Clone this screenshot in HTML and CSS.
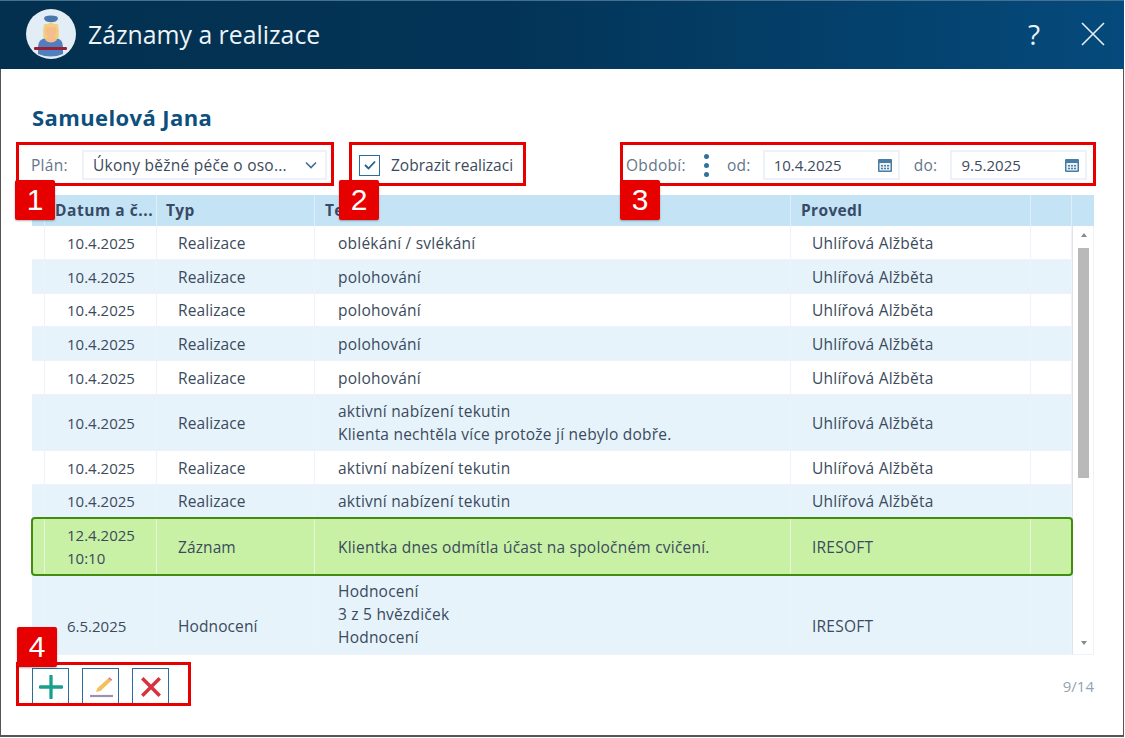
FILE: index.html
```html
<!DOCTYPE html>
<html lang="cs">
<head>
<meta charset="utf-8">
<title>Záznamy a realizace</title>
<link rel="stylesheet" href="styles.css">
</head>
<body>
<div class="window">
  <header class="titlebar">
    <svg class="avatar" viewBox="0 0 50 50" aria-hidden="true">
      <circle cx="25" cy="25" r="25" fill="#e3edf6"/>
      <path d="M12 38 q0 -8 8 -9 h10 q7 1 7 9 v7 q-12 5 -25 0z" fill="#4f7fbd"/>
      <path d="M17.500 29 q-1 -10 1 -14 h13 q2 4 1 14 l-3 2 h-9z" fill="#f3cf7c"/>
      <path d="M19 31 l2.500 -3 h7 l2.500 3 q-6 5 -12 0z" fill="#f5bd8d"/>
      <ellipse cx="25" cy="22" rx="5.500" ry="7" fill="#f5bd8d"/>
      <path d="M19 19 q1 -5 6 -5 q5 0 6 5 q-6 -3 -12 0z" fill="#f3cf7c"/>
      <path d="M20.500 12.500 q-4 -2.500 -1.500 -5 q6 -2 12 0 q2.500 2.500 -1.500 5 q-4.500 1.500 -9 0z" fill="#4a78ac"/>
      <rect x="8" y="38" width="33" height="3" rx="1" fill="#9a1f33"/>
    </svg>
    <h1 class="title">Záznamy a realizace</h1>
    <span class="help">?</span>
    <svg class="close" viewBox="0 0 24 24" aria-hidden="true">
      <path d="M1 1 L23 23 M23 1 L1 23" stroke="#e8f0f6" stroke-width="1.600" fill="none"/>
    </svg>
  </header>

  <main class="content">
    <h2 class="patient">Samuelová Jana</h2>

    <div class="toolbar">
      <div class="group group-plan">
        <span class="label">Plán:</span>
        <div class="field select">
          <span class="field-text">Úkony běžné péče o oso...</span>
          <svg class="chevron" viewBox="0 0 12 8" aria-hidden="true"><path d="M1 1.500 L6 6.500 L11 1.500" stroke="#3f6f97" stroke-width="1.600" fill="none"/></svg>
        </div>
        <span class="badge badge-1">1</span>
      </div>
      <div class="group group-check">
        <span class="checkbox">
          <svg viewBox="0 0 14 12" aria-hidden="true"><path d="M2 6 L5.500 9.500 L12 2.500" stroke="#1f5f8f" stroke-width="1.800" fill="none"/></svg>
        </span>
        <span class="check-label">Zobrazit realizaci</span>
        <span class="badge badge-2">2</span>
      </div>
      <div class="group group-period">
        <span class="label">Období:</span>
        <span class="dots"><i></i><i></i><i></i></span>
        <span class="label label-od">od:</span>
        <div class="field date">
          <span class="field-text">10.4.2025</span>
          <svg class="cal" viewBox="0 0 16 16" aria-hidden="true"><path d="M1 3 q0 -1 1 -1 h12 q1 0 1 1 v11 q0 1 -1 1 h-12 q-1 0 -1 -1z" fill="#4a7da3"/><rect x="2.500" y="6" width="11" height="7.500" fill="#e9f1f7"/><path d="M4 8h2v1.500h-2zM7 8h2v1.500h-2zM10 8h2v1.500h-2zM4 10.700h2v1.500h-2zM7 10.700h2v1.500h-2zM10 10.700h2v1.500h-2z" fill="#4a7da3"/></svg>
        </div>
        <span class="label label-do">do:</span>
        <div class="field date">
          <span class="field-text">9.5.2025</span>
          <svg class="cal" viewBox="0 0 16 16" aria-hidden="true"><path d="M1 3 q0 -1 1 -1 h12 q1 0 1 1 v11 q0 1 -1 1 h-12 q-1 0 -1 -1z" fill="#4a7da3"/><rect x="2.500" y="6" width="11" height="7.500" fill="#e9f1f7"/><path d="M4 8h2v1.500h-2zM7 8h2v1.500h-2zM10 8h2v1.500h-2zM4 10.700h2v1.500h-2zM7 10.700h2v1.500h-2zM10 10.700h2v1.500h-2z" fill="#4a7da3"/></svg>
        </div>
        <span class="badge badge-3">3</span>
      </div>
    </div>

    <div class="grid">
      <div class="row head">
        <div class="c c0"></div><div class="c c1">Datum a č...</div><div class="c c2">Typ</div><div class="c c3">Text</div><div class="c c4">Provedl</div><div class="c c5"></div><div class="c c6"></div>
      </div>
      <div class="body">
        <div class="rows">
          <div class="row h34"><div class="c c0"></div><div class="c c1">10.4.2025</div><div class="c c2">Realizace</div><div class="c c3">oblékání / svlékání</div><div class="c c4">Uhlířová Alžběta</div><div class="c c5"></div></div>
          <div class="row h34 alt"><div class="c c0"></div><div class="c c1">10.4.2025</div><div class="c c2">Realizace</div><div class="c c3">polohování</div><div class="c c4">Uhlířová Alžběta</div><div class="c c5"></div></div>
          <div class="row h33"><div class="c c0"></div><div class="c c1">10.4.2025</div><div class="c c2">Realizace</div><div class="c c3">polohování</div><div class="c c4">Uhlířová Alžběta</div><div class="c c5"></div></div>
          <div class="row h34 alt"><div class="c c0"></div><div class="c c1">10.4.2025</div><div class="c c2">Realizace</div><div class="c c3">polohování</div><div class="c c4">Uhlířová Alžběta</div><div class="c c5"></div></div>
          <div class="row h34"><div class="c c0"></div><div class="c c1">10.4.2025</div><div class="c c2">Realizace</div><div class="c c3">polohování</div><div class="c c4">Uhlířová Alžběta</div><div class="c c5"></div></div>
          <div class="row h56 alt"><div class="c c0"></div><div class="c c1">10.4.2025</div><div class="c c2">Realizace</div><div class="c c3">aktivní nabízení tekutin<br>Klienta nechtěla více protože jí nebylo dobře.</div><div class="c c4">Uhlířová Alžběta</div><div class="c c5"></div></div>
          <div class="row h34"><div class="c c0"></div><div class="c c1">10.4.2025</div><div class="c c2">Realizace</div><div class="c c3">aktivní nabízení tekutin</div><div class="c c4">Uhlířová Alžběta</div><div class="c c5"></div></div>
          <div class="row h33 alt"><div class="c c0"></div><div class="c c1">10.4.2025</div><div class="c c2">Realizace</div><div class="c c3">aktivní nabízení tekutin</div><div class="c c4">Uhlířová Alžběta</div><div class="c c5"></div></div>
          <div class="row h57 selected"><div class="c c0"></div><div class="c c1">12.4.2025<br>10:10</div><div class="c c2">Záznam</div><div class="c c3">Klientka dnes odmítla účast na spoločném cvičení.</div><div class="c c4">IRESOFT</div><div class="c c5"></div></div>
          <div class="row h80 alt low"><div class="c c0"></div><div class="c c1">6.5.2025</div><div class="c c2">Hodnocení</div><div class="c c3">Hodnocení<br>3 z 5 hvězdiček<br>Hodnocení</div><div class="c c4">IRESOFT</div><div class="c c5"></div></div>
        </div>
        <div class="scrollbar">
          <span class="arrow up"></span>
          <span class="thumb"></span>
          <span class="arrow down"></span>
        </div>
      </div>
    </div>

    <div class="footer">
      <div class="actions">
        <button class="btn" type="button" aria-label="Přidat">
          <svg viewBox="0 0 22 22"><path d="M11 1 V21 M1 11 H21" stroke="#17a08c" stroke-width="3" stroke-linecap="round" fill="none"/></svg>
        </button>
        <button class="btn" type="button" aria-label="Upravit">
          <svg viewBox="0 0 24 24"><path d="M7 17 L8.500 13 L19 3.500 L22 6 L11.500 16z" fill="#f2c15f"/><path d="M19 3.500 L20.500 2.200 L23.300 4.700 L22 6z" fill="#e2788a"/><path d="M1 21 H24" stroke="#9a93ab" stroke-width="2.200"/></svg>
        </button>
        <button class="btn" type="button" aria-label="Smazat">
          <svg viewBox="0 0 22 22"><path d="M3 3 L19 19 M19 3 L3 19" stroke="#d6333f" stroke-width="3.200" fill="none"/></svg>
        </button>
        <span class="badge badge-4">4</span>
      </div>
      <span class="count">9/14</span>
    </div>
  </main>
</div>
</body>
</html>
```

FILE: styles.css
```css
* { box-sizing: border-box; }
html, body { margin: 0; padding: 0; background: #fff; }
body {
  width: 1125px;
  height: 738px;
  overflow: hidden;
  font-family: "Open Sans", "Noto Sans", sans-serif;
  color: #3b4a5c;
}
.window {
  width: 1124px;
  height: 737px;
  border-left: 1px solid #555;
  border-right: 1px solid #555;
  border-bottom: 2px solid #555;
  background: #fff;
  display: flex;
  flex-direction: column;
}
.titlebar {
  height: 69px;
  flex: none;
  margin: 0 -1px;
  display: flex;
  align-items: center;
  padding: 0 19px 2px 26px;
  background: linear-gradient(90deg, #03304f 0%, #033457 45%, #054a7c 100%);
  border-top: 1px solid #46708f;
  color: #eef4f8;
}
.avatar { width: 50px; height: 50px; flex: none; }
.title {
  margin: 0 0 0 12px;
  font-size: 24.800px;
  font-weight: 400;
  line-height: 32px;
  flex: 1;
}
.help { font-size: 28px; line-height: 32px; margin-right: 41px; color: #e8f0f6; }
.close { width: 24px; height: 24px; flex: none; }

.content { flex: 1; display: flex; flex-direction: column; min-height: 0; padding: 0 0 0 15px; }
.patient {
  margin: 33px 0 0 16px;
  font-size: 22px;
  letter-spacing: .4px;
  line-height: 30px;
  font-weight: 700;
  color: #0d4f7d;
  height: 30px;
}
.toolbar { display: flex; align-items: flex-start; margin-top: 10px; height: 53px; position: relative; }
.group {
  position: relative;
  height: 44px;
  border: 3px solid #e60000;
  padding-top: 2px;
  display: flex;
  align-items: center;
  flex: none;
}
.group-plan { width: 318px; padding-left: 12px; }
.group-check { width: 177px; margin-left: 15px; padding-left: 7px; }
.group-period { width: 476px; margin-left: 94px; padding-left: 3px; }
.label { font-size: 15.500px; letter-spacing: .3px; color: #65768a; }
.field {
  height: 30px;
  background: #fff;
  border: 2px solid #edf2f8;
  display: flex;
  align-items: center;
  flex: none;
  font-size: 15px;
  color: #3b4a5c;
}
.field-text { flex: 1; white-space: nowrap; }
.select { width: 245px; margin-left: 14px; padding: 0 8px 0 9px; font-size: 15.500px; letter-spacing: .25px; }
.chevron { width: 12px; height: 8px; flex: none; }
.checkbox {
  width: 21px; height: 21px; flex: none;
  border: 1.500px solid #2b6d9e;
  display: flex; align-items: center; justify-content: center;
}
.checkbox svg { width: 14px; height: 12px; }
.check-label { font-size: 15.500px; margin-left: 11px; white-space: nowrap; }
.dots { display: flex; flex-direction: column; gap: 4px; margin-left: 18px; width: 5px; }
.dots i { width: 5px; height: 5px; border-radius: 50%; background: #33709b; display: block; }
.label-od { margin-left: 18px; }
.label-do { margin-left: 14px; }
.date { width: 137px; margin-left: 12px; padding: 0 5px 0 9px; }
.label-do + .date { margin-left: 13px; }
.cal { width: 16px; height: 16px; flex: none; }

.badge {
  position: absolute;
  width: 40px;
  height: 40px;
  background: #e60000;
  color: #fff;
  font-family: "Liberation Sans", sans-serif;
  font-size: 30px;
  line-height: 40px;
  text-align: center;
  border-radius: 2px;
  box-shadow: 0 1px 2px rgba(0,0,0,.3);
  z-index: 2;
}
.badge-1 { left: -4px; top: 35px; }
.badge-2 { left: -13px; top: 35px; }
.badge-3 { left: -3px; top: 35px; }
.badge-4 { left: -2px; top: -38px; }

.grid { width: 1062px; margin-left: 16px; flex: none; }
.row { display: flex; font-size: 15.500px; letter-spacing: .22px; line-height: 23px; }
.c { display: flex; align-items: center; flex: none; border-right: 1px solid #eef2fa; border-bottom: 1px solid #eef2fa; }
.c0 { width: 13px; }
.c1 { width: 112px; padding-left: 22px; font-size: 15px; letter-spacing: 0; }
.c2 { width: 158px; padding-left: 21px; }
.c3 { width: 476px; padding-left: 23px; }
.c4 { width: 240px; padding-left: 21px; }
.c5 { width: 41px; }
.c6 { width: 22px; border-right: none; }
.c1, .c3 { white-space: nowrap; }

.head { height: 31px; background: #c4e3f5; font-weight: 700; color: #374a66; letter-spacing: .35px; }
.row.head .c { border-color: #e0eef8; border-bottom: none; padding-left: 10px; }
.row.head .c1 { font-size: 15.500px; letter-spacing: .55px; }
.row.head .c2 { padding-left: 9px; }
.row.head .c0, .row.head .c5, .row.head .c6 { padding-left: 0; }

.body { display: flex; height: 429px; }
.rows { width: 1040px; flex: none; }
.h33 { height: 33px; }
.h34 { height: 34px; }
.h56 { height: 56px; }
.h57 { height: 57px; }
.h80 { height: 80px; }
.rows .c { height: 100%; padding-top: 1px; }
.rows .c2 { letter-spacing: .1px; }
.rows .c3 { display: flex; flex-direction: column; align-items: flex-start; justify-content: center; }
.rows .low .c1, .rows .low .c2, .rows .low .c4 { padding-top: 23px; }
.rows .low .c3 { padding-top: 0; }
.alt { background: #e6f3fb; }
.selected {
  background: #c8f1a6;
  outline: 2px solid #438c0f;
  outline-offset: -1px;
  border-radius: 3px;
  position: relative;
  z-index: 1;
}
.selected .c { border-color: #e8f4dc; border-bottom: none; }
.rows .selected .c1 { padding-top: 0; }
.scrollbar {
  width: 22px; flex: none;
  border-left: 1px solid #dfe3ea;
  border-right: 1px solid #eef2fa;
  border-bottom: 1px solid #eef2fa;
  display: flex; flex-direction: column; align-items: center;
  padding-left: 1px;
}
.arrow { width: 0; height: 0; border-left: 3.500px solid transparent; border-right: 3.500px solid transparent; flex: none; }
.up { border-bottom: 4px solid #888; margin-top: 7px; }
.down { border-top: 4px solid #888; margin-top: auto; margin-bottom: 9px; }
.thumb { width: 11px; height: 230px; background: #b9b9b9; margin-top: 11px; flex: none; }

.footer { display: flex; margin-top: 7px; position: relative; height: 44px; flex: none; }
.actions {
  position: relative;
  width: 175px;
  height: 44px;
  border: 3px solid #e60000;
  display: flex;
  gap: 13px;
  padding-left: 13px;
  padding-top: 3px;
}
.btn {
  width: 37px;
  height: 35px;
  flex: none;
  padding: 2px 0 0;
  background: #fff;
  border: 1px solid #2b6d9e;
  border-bottom: none;
  display: flex;
  align-items: center;
  justify-content: center;
}
.btn svg { width: 24px; height: 24px; display: block; }
.count { position: absolute; right: 29px; top: 14px; font-size: 15px; color: #94a3b3; }
```
